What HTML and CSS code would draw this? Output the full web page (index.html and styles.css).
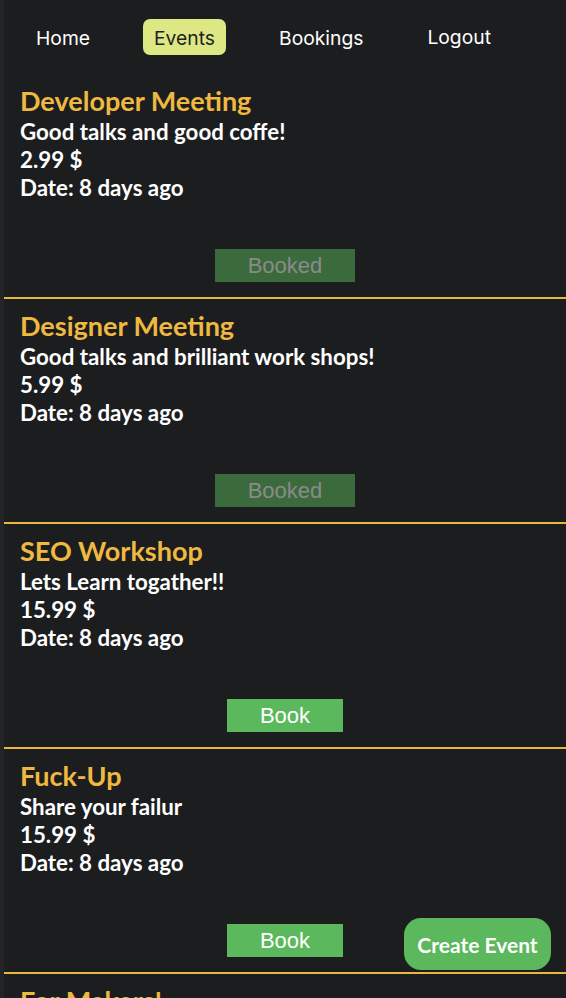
FILE: index.html
```html
<!DOCTYPE html>
<html>
<head>
<meta charset="utf-8">
<link rel="stylesheet" href="styles.css">
</head>
<body>
<div class="page">
  <nav class="nav">
    <a class="nav-link">Home</a>
    <a class="nav-link active">Events</a>
    <a class="nav-link">Bookings</a>
    <a class="nav-link logout">Logout</a>
  </nav>
  <main class="events">
    <section class="card">
      <div class="info">
        <h2 class="title">Developer Meeting</h2>
        <p class="line">Good talks and good coffe!</p>
        <p class="line">2.99 $</p>
        <p class="line">Date: 8 days ago</p>
      </div>
      <div class="actions"><button class="btn booked">Booked</button></div>
    </section>
    <section class="card">
      <div class="info">
        <h2 class="title">Designer Meeting</h2>
        <p class="line">Good talks and brilliant work shops!</p>
        <p class="line">5.99 $</p>
        <p class="line">Date: 8 days ago</p>
      </div>
      <div class="actions"><button class="btn booked">Booked</button></div>
    </section>
    <section class="card">
      <div class="info">
        <h2 class="title">SEO Workshop</h2>
        <p class="line">Lets Learn togather!!</p>
        <p class="line">15.99 $</p>
        <p class="line">Date: 8 days ago</p>
      </div>
      <div class="actions"><button class="btn">Book</button></div>
    </section>
    <section class="card">
      <div class="info">
        <h2 class="title">Fuck-Up</h2>
        <p class="line">Share your failur</p>
        <p class="line">15.99 $</p>
        <p class="line">Date: 8 days ago</p>
      </div>
      <div class="actions"><button class="btn">Book</button></div>
    </section>
    <section class="card">
      <div class="info">
        <h2 class="title">For Makers!</h2>
        <p class="line">Build things together</p>
        <p class="line">9.99 $</p>
        <p class="line">Date: 8 days ago</p>
      </div>
      <div class="actions"><button class="btn">Book</button></div>
    </section>
  </main>
  <button class="create">Create Event</button>
</div>
</body>
</html>
```
FILE: styles.css
```css
html, body {
  margin: 0;
  padding: 0;
  background: #1c1d1f;
}
body {
  border-left: 4px solid #232427;
  font-family: Lato, "Open Sans", sans-serif;
  color: #ffffff;
}
.nav {
  display: flex;
  align-items: center;
  gap: 42px;
  height: 74px;
  padding: 0 0 0 21px;
  box-sizing: border-box;
  font-family: Inter, Roboto, sans-serif;
  font-size: 19.3px;
}
.nav-link {
  display: block;
  padding: 2px 11px 0;
  line-height: 34px;
  border-radius: 7px;
  color: #ffffff;
}
.nav-link.active {
  background: #dde783;
  color: #1e1f22;
}
.nav-link.logout {
  padding-top: 1px;
  padding-bottom: 1px;
}
.events {
  display: flex;
  flex-direction: column;
}
.card {
  height: 225px;
  box-sizing: border-box;
  border-bottom: 2px solid #e9b73b;
  padding: 12px 16px 15px;
  display: flex;
  flex-direction: column;
  justify-content: space-between;
}
.title {
  margin: 0 0 2px;
  font-size: 27px;
  line-height: 30px;
  font-weight: 700;
  color: #efb941;
}
.line {
  margin: 0;
  font-size: 22.3px;
  line-height: 28px;
  font-weight: 700;
}
.actions {
  display: flex;
  justify-content: center;
}
.btn {
  font-family: "Liberation Sans", Arial, sans-serif;
  font-size: 22px;
  line-height: 25px;
  padding: 4px 33px;
  border: none;
  border-radius: 0;
  background: #5cb85c;
  color: #ffffff;
}
.btn.booked {
  background: #3b6a3d;
  color: #8a8a8a;
}
.create {
  position: fixed;
  right: 15px;
  bottom: 28px;
  width: 147px;
  height: 52px;
  border: none;
  border-radius: 17px;
  background: #5cb85c;
  color: #ffffff;
  font-family: Lato, sans-serif;
  font-weight: 700;
  font-size: 21px;
  padding: 0;
}
```
